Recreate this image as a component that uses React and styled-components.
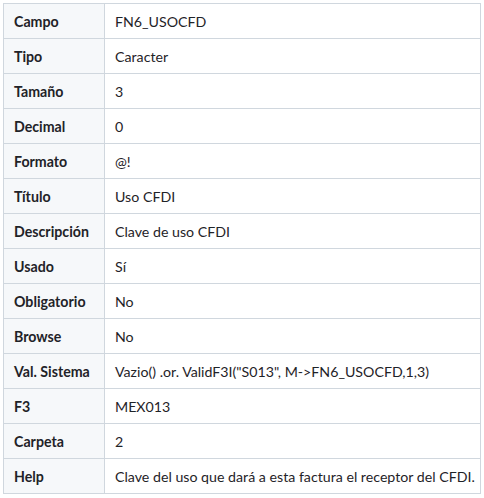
import React from 'react';
import styled, { createGlobalStyle } from 'styled-components';

const GlobalStyle = createGlobalStyle`
  body {
    margin: 0;
    padding: 3px;
    background: #ffffff;
    font-family: Lato, "Noto Sans", sans-serif;
  }
`;

const Table = styled.table`
  width: 478px;
  border-collapse: collapse;
  table-layout: fixed;
  font-size: 14.2px;
  color: #1f2328;
`;

const Row = styled.tr`
  height: 35px;
`;

const Label = styled.th`
  width: 80px;
  padding: 0 10px;
  text-align: left;
  font-weight: 700;
  background: #f6f8fa;
  border: 1px solid #d0d7de;
  white-space: nowrap;
`;

const Value = styled.td`
  padding: 0 10px;
  background: #ffffff;
  border: 1px solid #d0d7de;
  white-space: nowrap;
`;

const rows = [
  ['Campo', 'FN6_USOCFD'],
  ['Tipo', 'Caracter'],
  ['Tamaño', '3'],
  ['Decimal', '0'],
  ['Formato', '@!'],
  ['Título', 'Uso CFDI'],
  ['Descripción', 'Clave de uso CFDI'],
  ['Usado', 'Sí'],
  ['Obligatorio', 'No'],
  ['Browse', 'No'],
  ['Val. Sistema', 'Vazio() .or. ValidF3I("S013", M->FN6_USOCFD,1,3)'],
  ['F3', 'MEX013'],
  ['Carpeta', '2'],
  ['Help', 'Clave del uso que dará a esta factura el receptor del CFDI.'],
];

export default function App() {
  return (
    <>
      <GlobalStyle />
      <Table>
        <tbody>
          {rows.map(([label, value]) => (
            <Row key={label}>
              <Label>{label}</Label>
              <Value>{value}</Value>
            </Row>
          ))}
        </tbody>
      </Table>
    </>
  );
}
